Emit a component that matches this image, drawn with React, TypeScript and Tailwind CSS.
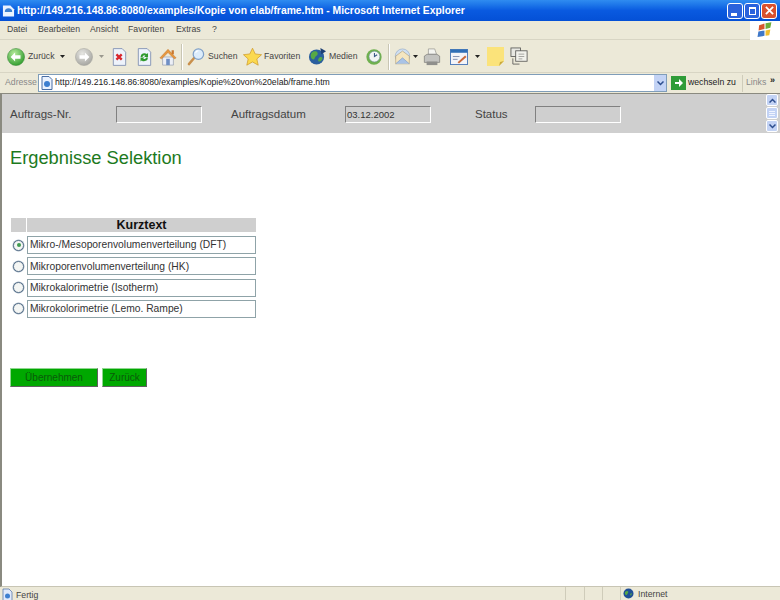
import React from "react";

const font = "font-['Liberation_Sans',Arial,sans-serif]";

function Sep({ className = "" }: { className?: string }) {
  return <div className={`h-[26px] w-[2px] shrink-0 border-l border-[#c9c6b4] border-r border-r-white ${className}`} />;
}

function Caret({ className = "" }: { className?: string }) {
  return (
    <svg width="5" height="3" viewBox="0 0 5 3" className={`shrink-0 ${className}`}>
      <path d="M0 0h5L2.500 3z" fill="#222" />
    </svg>
  );
}

function Arrow({ back, gray }: { back?: boolean; gray?: boolean }) {
  const id = gray ? "g" : "c";
  return (
    <svg width="18" height="18" viewBox="0 0 20 20" className="shrink-0">
      <defs>
        <radialGradient id={id} cx="40%" cy="30%" r="75%">
          <stop offset="0" stopColor={gray ? "#e6e6e2" : "#b6ea9c"} />
          <stop offset="1" stopColor={gray ? "#a3a39e" : "#2c9a2a"} />
        </radialGradient>
      </defs>
      <circle cx="10" cy="10" r="9.500" fill={`url(#${id})`} stroke={gray ? "#a5a5a0" : "#3c8a3a"} strokeWidth="0.600" />
      <path d={back ? "M4 10l5-5v3h6v4H9v3z" : "M16 10l-5-5v3H5v4h6v3z"} fill="#fff" />
    </svg>
  );
}

function PageStop() {
  return (
    <svg width="15" height="18" viewBox="0 0 17 20" className="shrink-0">
      <path d="M1.500.5h10l4 4v15h-14z" fill="#eef3fb" stroke="#7f8fb0" />
      <path d="M5 7l6 6M11 7l-6 6" stroke="#d8262c" strokeWidth="2.600" />
    </svg>
  );
}

function PageRefresh() {
  return (
    <svg width="15" height="18" viewBox="0 0 17 20" className="shrink-0">
      <path d="M1.500.5h10l4 4v15h-14z" fill="#eef3fb" stroke="#7f8fb0" />
      <path d="M4 10a4.500 4.500 0 0 1 7.200-3.400l1.300-1.100v4.500H8l1.500-1.500A2.400 2.400 0 0 0 6.200 10z" fill="#2f9a2c" />
      <path d="M12.500 10.500a4.500 4.500 0 0 1-7.200 3.400L4 15v-4.500h4.500L7 12a2.400 2.400 0 0 0 3.300-1.500z" fill="#2f9a2c" />
    </svg>
  );
}

function Home() {
  return (
    <svg width="18" height="18" viewBox="0 0 20 20" className="shrink-0">
      <path d="M4 10v9h12v-9z" fill="#eceff6" stroke="#8b94ab" strokeWidth="0.700" />
      <path d="M1 11L10 1.500 19 11l-2 1-7-7-7 7z" fill="#e8983e" stroke="#b96a20" strokeWidth="0.500" />
      <rect x="8" y="12" width="4" height="7" fill="#6f8fc4" />
      <rect x="14" y="2.500" width="2.500" height="4.500" fill="#c9782f" />
    </svg>
  );
}

function Search() {
  return (
    <svg width="19" height="19" viewBox="0 0 20 20" className="shrink-0">
      <path d="M7.500 11.500L2 18" stroke="#c9904c" strokeWidth="2.600" strokeLinecap="round" />
      <circle cx="12" cy="7.500" r="5.500" fill="#dcecfb" stroke="#7fa0c8" strokeWidth="1.300" />
      <path d="M9 6a3.500 3.500 0 0 1 3-2" stroke="#fff" strokeWidth="1.200" fill="none" />
    </svg>
  );
}

function Star() {
  return (
    <svg width="19" height="19" viewBox="0 0 21 20" className="shrink-0">
      <path
        d="M10.500.8l3 6.400 7 .8-5.200 4.700 1.500 6.900-6.300-3.600-6.300 3.600 1.500-6.900L.5 8l7-.8z"
        fill="#fbd94f"
        stroke="#cf9a2a"
        strokeWidth="0.800"
      />
    </svg>
  );
}

function Media() {
  return (
    <svg width="19" height="19" viewBox="0 0 20 20" className="shrink-0">
      <circle cx="9" cy="10.500" r="8" fill="#2a5f9e" />
      <path d="M4 6c2-2 5-2 6 0s-1 3-2 4-1 4-3 3-3-5-1-7zM12 11c2-1 4 0 3 2s-3 3-4 2 0-3 1-4z" fill="#57a845" />
      <path d="M13 1l6 3.500-5 3z" fill="#1d3f73" />
    </svg>
  );
}

function History() {
  return (
    <svg width="18" height="18" viewBox="0 0 20 20" className="shrink-0">
      <circle cx="10" cy="10" r="8.500" fill="#6fb04f" />
      <circle cx="10.500" cy="9.500" r="6" fill="#f2f5f4" stroke="#6d8c9d" strokeWidth="0.600" />
      <path d="M10.500 5.500v4l3-2" stroke="#3b5a86" strokeWidth="1.200" fill="none" />
    </svg>
  );
}

function Mail() {
  return (
    <svg width="17" height="18" viewBox="0 0 20 20" className="shrink-0">
      <circle cx="10" cy="9" r="8.500" fill="#cfdff2" stroke="#8ea5c6" strokeWidth="0.700" />
      <path d="M2 9l8-6 8 6v9H2z" fill="#f5e6c0" stroke="#a58f5e" strokeWidth="0.600" />
      <path d="M2 18l8-7 8 7" fill="#a9c3e6" stroke="#6e8fbf" strokeWidth="0.600" />
    </svg>
  );
}

function Printer() {
  return (
    <svg width="18" height="18" viewBox="0 0 20 20" className="shrink-0">
      <path d="M6 1h7l2 6H6z" fill="#f4f4f0" stroke="#8a8a86" strokeWidth="0.700" />
      <path d="M1.500 9l3-2h11l3 2v7h-17z" fill="#c3c3c0" stroke="#71716e" strokeWidth="0.700" />
      <rect x="4" y="15" width="12" height="4" fill="#8f8f8c" />
    </svg>
  );
}

function EditPage() {
  return (
    <svg width="18" height="16" viewBox="0 0 19 17" className="shrink-0">
      <rect x="0.500" y="0.500" width="18" height="16" fill="#f3f4f8" stroke="#4c7ab8" />
      <rect x="0.500" y="0.500" width="18" height="3.500" fill="#2f6fb6" />
      <path d="M3 8h7M3 11h5" stroke="#7f8fb0" />
      <path d="M8 14l8-7 1.500 1.500-8 7z" fill="#c86a3a" />
    </svg>
  );
}

function Note() {
  return (
    <svg width="17" height="19" viewBox="0 0 17 19" className="shrink-0">
      <path d="M0 0h17v14l-5 5H0z" fill="#fbe37a" />
      <path d="M12 19l1-4 4-1z" fill="#c9a93e" />
    </svg>
  );
}

function Messenger() {
  return (
    <svg width="19" height="19" viewBox="0 0 20 20" fill="none" stroke="#5a5a58" strokeWidth="0.900" className="shrink-0">
      <rect x="1" y="1" width="10" height="9" fill="#e8e8e2" />
      <rect x="6" y="4" width="12" height="11" fill="#f2f2ec" />
      <path d="M9 7.500h6M9 10h6M9 12.500h4" stroke="#9a9a96" />
      <path d="M3 12v6h7" />
    </svg>
  );
}

function ToolLabel({ text, className }: { text: string; className: string }) {
  return <span className={`shrink-0 text-[8.700px] whitespace-nowrap text-[#444] ${className}`}>{text}</span>;
}

function FormField({ label, labelClass, value = "" }: { label: string; labelClass: string; value?: string }) {
  return (
    <>
      <span className={`text-[11.500px] text-[#444] ${labelClass}`}>{label}</span>
      <div className="h-[17px] w-[86px] border border-t-[#808080] border-l-[#808080] border-b-white border-r-white pl-[1px] text-[9.500px] leading-[15px] text-[#333]">
        {value}
      </div>
    </>
  );
}

function Radio({ checked }: { checked?: boolean }) {
  return (
    <div className="flex h-[11px] w-[11px] items-center justify-center rounded-full border border-[#58708a] bg-[#f4f6f4] shadow-[0_0_0_0.500px_#9fb0c0]">
      {checked && <div className="h-[4px] w-[4px] rounded-full bg-[#3f9a50]" />}
    </div>
  );
}

const options = [
  "Mikro-/Mesoporenvolumenverteilung (DFT)",
  "Mikroporenvolumenverteilung (HK)",
  "Mikrokalorimetrie (Isotherm)",
  "Mikrokolorimetrie (Lemo. Rampe)",
];

export default function App() {
  return (
    <div className={`flex h-[600px] w-[780px] flex-col overflow-hidden bg-white ${font}`}>
      {/* Title bar */}
      <div className="flex h-[21px] shrink-0 items-center bg-gradient-to-b from-[#2f8cf0] via-[#0a5ae0] to-[#0450d6] pl-[2px] pr-[3px]">
        <svg width="13" height="14" viewBox="0 0 14 14" className="shrink-0">
          <path d="M1 1h8l4 4v8H1z" fill="#eaf2ff" />
          <path d="M3 8a4 4 0 0 1 8 0z" fill="#3d7fd0" />
        </svg>
        <span className="ml-[2px] whitespace-nowrap text-[10.350px] font-bold text-white">
          http://149.216.148.86:8080/examples/Kopie von elab/frame.htm - Microsoft Internet Explorer
        </span>
        <div className="ml-auto flex gap-px">
          <div className="flex h-[16px] w-[16px] items-end rounded-[3px] border border-white bg-[#2a62dc] pb-[2px] pl-[3px]">
            <div className="h-[3px] w-[6px] bg-white" />
          </div>
          <div className="flex h-[16px] w-[16px] items-center justify-center rounded-[3px] border border-white bg-[#2a62dc]">
            <div className="h-[8px] w-[7px] border border-t-[2px] border-white" />
          </div>
          <div className="flex h-[16px] w-[16px] items-center justify-center rounded-[3px] border border-white bg-[#d9512e]">
            <svg width="9" height="9" viewBox="0 0 10 10">
              <path d="M1 1l8 8M9 1l-8 8" stroke="#fff" strokeWidth="2" />
            </svg>
          </div>
        </div>
      </div>

      {/* Menu bar */}
      <div className="flex h-[19px] shrink-0 items-center border-b border-[#d8d5c4] bg-[#ece9d8] text-[8.700px] text-[#444]">
        <div className="flex flex-1 pl-[7px]">
          <span className="w-[31px]">Datei</span>
          <span className="w-[52px]">Bearbeiten</span>
          <span className="w-[38px]">Ansicht</span>
          <span className="w-[48px]">Favoriten</span>
          <span className="w-[36px]">Extras</span>
          <span>?</span>
        </div>
        <div className="flex h-[19px] w-[30px] items-center justify-center bg-white">
          <svg width="16" height="16" viewBox="0 0 15 15">
            <path d="M2 3l5-1.500v5L1.500 8z" fill="#d8552c" />
            <path d="M8 1.200l5.500-1-1 5.300-4.500 1z" fill="#6fae3a" />
            <path d="M1.300 9L7 8v5l-6.500 1z" fill="#3e77c8" />
            <path d="M8 8l4.500-1-1 5.500L8 13z" fill="#f0bd2e" />
          </svg>
        </div>
      </div>

      {/* Toolbar */}
      <div className="flex h-[33px] shrink-0 items-center border-b border-[#d8d5c4] bg-[#ece9d8] pl-[7px] pt-px">
        <Arrow back />
        <ToolLabel text="Zurück" className="ml-[3px] w-[25px]" />
        <Caret className="ml-[7px]" />
        <div className="ml-[10px] flex shrink-0">
          <Arrow gray />
        </div>
        <Caret className="ml-[6px] opacity-40" />
        <div className="ml-[8px] flex shrink-0">
          <PageStop />
        </div>
        <div className="ml-[10px] flex shrink-0">
          <PageRefresh />
        </div>
        <div className="ml-[7px] flex shrink-0">
          <Home />
        </div>
        <Sep className="ml-[4px]" />
        <div className="ml-[4px] flex shrink-0">
          <Search />
        </div>
        <ToolLabel text="Suchen" className="ml-[2px] w-[27px]" />
        <div className="ml-[8px] flex shrink-0">
          <Star />
        </div>
        <ToolLabel text="Favoriten" className="ml-[2px] w-[36px]" />
        <div className="ml-[8px] flex shrink-0">
          <Media />
        </div>
        <ToolLabel text="Medien" className="ml-[2px] w-[26px]" />
        <div className="ml-[10px] flex shrink-0">
          <History />
        </div>
        <Sep className="ml-[5px]" />
        <div className="ml-[4px] flex shrink-0">
          <Mail />
        </div>
        <Caret className="ml-[2px]" />
        <div className="ml-[5px] flex shrink-0">
          <Printer />
        </div>
        <div className="ml-[9px] flex shrink-0">
          <EditPage />
        </div>
        <Caret className="ml-[7px]" />
        <div className="ml-[7px] flex shrink-0">
          <Note />
        </div>
        <div className="ml-[6px] flex shrink-0">
          <Messenger />
        </div>
      </div>

      {/* Address bar */}
      <div className="flex h-[20px] shrink-0 items-center bg-[#ece9d8] pl-[5px] text-[8.700px] text-[#555]">
        <span className="w-[33px] text-[#888]">Adresse</span>
        <div className="flex h-[18px] w-[629px] items-center border border-[#7f9db9] bg-white pl-[1px]">
          <svg width="14" height="14" viewBox="0 0 14 14" className="shrink-0">
            <path d="M2 .5h7l3 3v10H2z" fill="#eaf2ff" stroke="#4a6fa5" />
            <circle cx="7" cy="8" r="3" fill="#3d7fd0" />
          </svg>
          <span className="ml-px whitespace-nowrap text-[#222]">
            http://149.216.148.86:8080/examples/Kopie%20von%20elab/frame.htm
          </span>
          <div className="ml-auto flex h-[16px] w-[12px] items-center justify-center bg-[#c3d3f5]">
            <svg width="7" height="5" viewBox="0 0 7 5">
              <path d="M.5.500L3.500 3.500 6.500.500" stroke="#2d4e8f" strokeWidth="1.500" fill="none" />
            </svg>
          </div>
        </div>
        <div className="ml-[4px] flex h-[14px] w-[15px] shrink-0 items-center justify-center bg-[#2f9c38]">
          <svg width="10" height="10" viewBox="0 0 10 10">
            <path d="M1 4h4V1l4 4-4 4V6H1z" fill="#fff" />
          </svg>
        </div>
        <span className="ml-[2px] w-[54px] shrink-0 whitespace-nowrap text-[#222]">wechseln zu</span>
        <div className="h-[17px] w-px shrink-0 bg-[#cfccba]" />
        <span className="ml-[3px] w-[24px] shrink-0 text-[#888]">Links</span>
        <span className="mb-[5px] text-[9px] font-bold leading-none text-[#222]">»</span>
      </div>

      {/* Page area */}
      <div className="flex min-h-0 flex-1 flex-col border-y border-l-2 border-[#8a8a80] border-b-[#c8c5b4]">
        <div className="flex h-[39px] shrink-0 bg-[#cfcfcf] pl-[8px] pr-[2px]">
          <div className="flex items-center pt-[2px]">
            <FormField label="Auftrags-Nr." labelClass="w-[106px]" />
            <FormField label="Auftragsdatum" labelClass="ml-[29px] w-[114px]" value="03.12.2002" />
            <FormField label="Status" labelClass="ml-[44px] w-[60px]" />
          </div>
          <div className="ml-auto flex h-[38px] w-[12px] flex-col gap-px">
            <div className="flex h-[12px] items-center justify-center rounded-[2px] border border-white bg-[#c3d3f5]">
              <svg width="7" height="5" viewBox="0 0 7 5">
                <path d="M.5 4.500L3.500 1.500 6.500 4.500" stroke="#2d4e8f" strokeWidth="1.500" fill="none" />
              </svg>
            </div>
            <div className="flex h-[12px] flex-col items-center justify-center gap-px rounded-[2px] border border-white bg-[#c3d3f5]">
              <div className="h-px w-[6px] bg-[#f0f4ff]" />
              <div className="h-px w-[6px] bg-[#f0f4ff]" />
              <div className="h-px w-[6px] bg-[#f0f4ff]" />
            </div>
            <div className="flex h-[12px] items-center justify-center rounded-[2px] border border-white bg-[#c3d3f5]">
              <svg width="7" height="5" viewBox="0 0 7 5">
                <path d="M.5.500L3.500 3.500 6.500.500" stroke="#2d4e8f" strokeWidth="1.500" fill="none" />
              </svg>
            </div>
          </div>
        </div>

        <div className="flex flex-1 flex-col bg-white pl-[8px]">
          <h1 className="mt-[14px] text-[18.300px] leading-[21px] text-[#1d7a1d]">Ergebnisse Selektion</h1>

          {/* Selection table */}
          <div className="mt-[50px] ml-px w-[245px]">
            <div className="flex h-[14px] gap-px">
              <div className="w-[15px] bg-[#cfcfcf]" />
              <div className="flex-1 bg-[#cfcfcf] text-center text-[12.500px] font-bold leading-[14px] text-[#111]">Kurztext</div>
            </div>
            <div className="mt-[4px] flex flex-col gap-[3.340px]">
              {options.map((opt, i) => (
                <div key={opt} className="flex h-[18px] items-center">
                  <div className="flex w-[16px] justify-center pr-[1px]">
                    <Radio checked={i === 0} />
                  </div>
                  <div className="flex h-[18px] flex-1 items-center border border-[#8fa3a8] pl-[2px] text-[10.300px] whitespace-nowrap text-[#333]">
                    {opt}
                  </div>
                </div>
              ))}
            </div>
          </div>

          <div className="mt-[50px] flex gap-[4px]">
            <button className="h-[19px] w-[88px] border border-t-[#8fd68f] border-l-[#8fd68f] border-r-[#606060] border-b-[#606060] bg-[#00a800] text-[10px] text-[#0a5a0a]">
              Übernehmen
            </button>
            <button className="h-[19px] w-[45px] border border-t-[#8fd68f] border-l-[#8fd68f] border-r-[#606060] border-b-[#606060] bg-[#00a800] text-[10px] text-[#0a5a0a]">
              Zurück
            </button>
          </div>
        </div>
      </div>

      {/* Status bar */}
      <div className="flex h-[13px] shrink-0 items-start bg-[#ece9d8] text-[8.700px] leading-[13px] text-[#444]">
        <div className="flex flex-1 items-center pl-[2px]">
          <svg width="11" height="13" viewBox="0 0 11 13" className="shrink-0">
            <path d="M1 1h6l3 3v9H1z" fill="#dfe9fb" stroke="#4a6fa5" strokeWidth="0.700" />
            <circle cx="5.500" cy="8" r="2.500" fill="#3d7fd0" />
          </svg>
          <span className="ml-[3px] pt-[2px]">Fertig</span>
        </div>
        <div className="h-[13px] w-[19px] border-l border-[#cfccba]" />
        <div className="h-[13px] w-[18px] border-l border-[#cfccba]" />
        <div className="h-[13px] w-[18px] border-l border-[#cfccba]" />
        <div className="flex h-[13px] w-[160px] items-center border-l border-[#cfccba] pl-[2px]">
          <svg width="11" height="11" viewBox="0 0 11 11" className="shrink-0">
            <circle cx="5.500" cy="5.500" r="5" fill="#1f4f96" />
            <path d="M2 4c2-2 4-1 3 1S3 8 2 6zM7 6l2-1-1 3z" fill="#57a845" />
          </svg>
          <span className="ml-[4px] pt-[2px]">Internet</span>
        </div>
      </div>
    </div>
  );
}
